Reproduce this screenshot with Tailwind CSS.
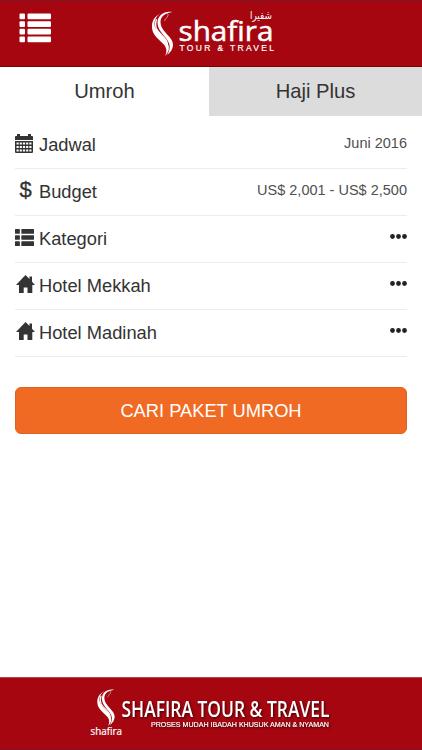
<!DOCTYPE html>
<html lang="id">
<head>
<meta charset="utf-8">
<title>Shafira Tour &amp; Travel</title>
<script src="https://cdn.jsdelivr.net/npm/@tailwindcss/browser@4"></script>
</head>
<body class="bg-white">
<svg class="hidden">
  <symbol id="flame" viewBox="0 0 24 45">
    <path d="M11 2C4 5 1 10 1.500 17C2 26 13 31 15 36C16.500 39 16 42 14.500 45C20 40 19 34 15 29C10 23 4 19 4 13C4 8 7 4 11 2z"/>
    <path d="M22 1C14-.5 7 4 7 12C7 21 18 27 19 34C19.500 38 18.500 41 16.500 44C23 39 24 33 20.500 28C17 23 10 18 10 11C10 5 15 2 22 1z"/>
    <path d="M6 8C3 18 8 21 13 26C17 30 18 35 17 40" fill="none" stroke="currentColor" stroke-width="1.400"/>
    <path d="M17 2.500C19 5 15 7 14 10" fill="none" stroke="currentColor" stroke-width=".8" opacity=".7"/>
  </symbol>
  <symbol id="list" viewBox="0 0 18 16">
    <path d="M.5 0h3.600q.5 0 .5.500v3.400q0 .5-.5.500H.5q-.5 0-.5-.5V.5Q0 0 .5 0zM6.500 0h11q.5 0 .5.500v3.400q0 .5-.5.500h-11q-.5 0-.5-.5V.5q0-.5.500-.5zM.5 5.800h3.600q.5 0 .5.500v3.400q0 .5-.5.500H.5q-.5 0-.5-.5V6.300q0-.5.500-.5zM6.500 5.800h11q.5 0 .5.500v3.400q0 .5-.5.500h-11q-.5 0-.5-.5V6.300q0-.5.500-.5zM.5 11.600h3.600q.5 0 .5.500v3.400q0 .5-.5.500H.5q-.5 0-.5-.5v-3.400q0-.5.500-.5zM6.500 11.600h11q.5 0 .5.500v3.400q0 .5-.5.500h-11q-.5 0-.5-.5v-3.400q0-.5.500-.5z"/>
  </symbol>
  <symbol id="home" viewBox="0 0 19 18"><path d="M9.500 0 13.500 4V1.500H16V6.700L19 10H16.300v8h-4.800v-5.500H7.700V18H3v-8H0z"/></symbol>
</svg>
<div class="flex h-[750px] w-[422px] flex-col overflow-hidden font-['Liberation_Sans',Arial,sans-serif] text-[#333]">
  <header class="h-[67px] shrink-0 border-y border-t-[#7c1626] border-b-[#7d0008] bg-[#a5060f] text-white">
    <svg class="-mt-px block" width="422" height="67" fill="currentColor">
      <g>
        <rect x="19.500" y="13.500" width="5.500" height="5.700" rx="1"/><rect x="27.500" y="13.500" width="23.500" height="5.700" rx="1"/>
        <rect x="19.500" y="21.200" width="5.500" height="5.700" rx="1"/><rect x="27.500" y="21.200" width="23.500" height="5.700" rx="1"/>
        <rect x="19.500" y="28.800" width="5.500" height="5.700" rx="1"/><rect x="27.500" y="28.800" width="23.500" height="5.700" rx="1"/>
        <rect x="19.500" y="36.500" width="5.500" height="5.700" rx="1"/><rect x="27.500" y="36.500" width="23.500" height="5.700" rx="1"/>
      </g>
      <use href="#flame" x="150.500" y="11" width="24" height="45"/>
      <text x="178.500" y="40.500" font-family="Open Sans, sans-serif" font-size="27" font-weight="400" stroke="currentColor" stroke-width=".5" textLength="95" lengthAdjust="spacingAndGlyphs">shafira</text>
      <text x="250" y="18.500" font-family="DejaVu Sans, sans-serif" font-size="11" textLength="22" lengthAdjust="spacingAndGlyphs">شفيرا</text>
      <text x="179.500" y="50.800" font-family="Liberation Sans, sans-serif" font-size="8.500" textLength="94.500" stroke="currentColor" stroke-width=".2">TOUR &amp; TRAVEL</text>
    </svg>
  </header>
  <nav class="flex h-[49px] shrink-0 text-center text-[20.200px] leading-[49px]">
    <div class="w-[209px]">Umroh</div>
    <div class="flex-1 bg-[#dcdcdc]">Haji Plus</div>
  </nav>
  <main class="flex-1 px-[15px] pt-[6px] text-[18.300px]">
    <div class="flex h-[47px] items-center border-b border-[#ececec]">
      <svg class="mr-[6px] -mt-[4px]" width="18" height="19" viewBox="0 0 18 19" fill="currentColor"><path d="M0 3q0-1 1-1h1V0h3v2h8V0h3v2h1q1 0 1 1v3H0z"/><path fill-rule="evenodd" d="M0 7h18v11q0 1-1 1H1q-1 0-1-1zM1.500 8.500v2h2.200v-2zm3.200 0v2h2.200v-2zm3.200 0v2h2.200v-2zm3.200 0v2h2.200v-2zm3.200 0v2h2.200v-2zM1.500 12v2h2.200v-2zm3.200 0v2h2.200v-2zm3.200 0v2h2.200v-2zm3.200 0v2h2.200v-2zm3.200 0v2h2.200v-2zM1.500 15.500v2h2.200v-2zm3.200 0v2h2.200v-2zm3.200 0v2h2.200v-2zm3.200 0v2h2.200v-2zm3.200 0v2h2.200v-2z"/></svg>
      <span class="-mt-px">Jadwal</span><span class="ml-auto -mt-[3px] text-[14.500px] text-[#505050]">Juni 2016</span>
    </div>
    <div class="flex h-[47px] items-center border-b border-[#ececec]">
      <span class="-mt-[6px] w-[24px] pl-[4.500px] text-[22px] [-webkit-text-stroke:0.300px_#333]">$</span>
      <span class="-mt-px">Budget</span><span class="ml-auto -mt-[3px] text-[14.500px] text-[#505050]">US$ 2,001 - US$ 2,500</span>
    </div>
    <div class="flex h-[47px] items-center border-b border-[#ececec]">
      <svg class="mr-[5px] -mt-[3px]" width="19" height="17" fill="currentColor"><use href="#list" width="19" height="17"/></svg>
      <span class="-mt-px">Kategori</span>
      <svg class="ml-auto -mt-[6px]" width="17" height="5" fill="#222"><circle cx="2.500" cy="2.500" r="2.400"/><circle cx="8.500" cy="2.500" r="2.400"/><circle cx="14.500" cy="2.500" r="2.400"/></svg>
    </div>
    <div class="flex h-[47px] items-center border-b border-[#ececec]">
      <svg class="mr-[4px] ml-px -mt-[5px]" width="19" height="18" fill="currentColor"><use href="#home" width="19" height="18"/></svg>
      <span class="-mt-px">Hotel Mekkah</span>
      <svg class="ml-auto -mt-[6px]" width="17" height="5" fill="#222"><circle cx="2.500" cy="2.500" r="2.400"/><circle cx="8.500" cy="2.500" r="2.400"/><circle cx="14.500" cy="2.500" r="2.400"/></svg>
    </div>
    <div class="flex h-[47px] items-center border-b border-[#ececec]">
      <svg class="mr-[4px] ml-px -mt-[5px]" width="19" height="18" fill="currentColor"><use href="#home" width="19" height="18"/></svg>
      <span class="-mt-px">Hotel Madinah</span>
      <svg class="ml-auto -mt-[6px]" width="17" height="5" fill="#222"><circle cx="2.500" cy="2.500" r="2.400"/><circle cx="8.500" cy="2.500" r="2.400"/><circle cx="14.500" cy="2.500" r="2.400"/></svg>
    </div>
    <button class="mt-[30px] block h-[47px] w-full rounded-[6px] border border-[#e0621f] bg-[#f06a23] text-[18.300px] text-white">CARI PAKET UMROH</button>
  </main>
  <footer class="h-[73px] shrink-0 border-y border-t-[#b5404a] border-b-[#7c1626] bg-[#a5060f] text-white">
    <svg class="block" width="422" height="71" fill="currentColor">
      <use href="#flame" x="96" y="11" width="20" height="37"/>
      <text x="90.500" y="57" font-family="Open Sans, sans-serif" font-size="10" stroke="currentColor" stroke-width=".2" textLength="31.500" lengthAdjust="spacingAndGlyphs">shafira</text>
      <g class="drop-shadow-[1px_1px_1px_rgba(0,0,0,0.6)]">
      <text x="121.500" y="38.500" font-family="Open Sans, sans-serif" font-size="22" font-weight="600" textLength="208" lengthAdjust="spacingAndGlyphs">SHAFIRA TOUR &amp; TRAVEL</text>
      <text x="151" y="49" font-family="Liberation Sans, sans-serif" font-size="8" textLength="178" lengthAdjust="spacingAndGlyphs" stroke="currentColor" stroke-width=".2">PROSES MUDAH IBADAH KHUSUK AMAN &amp; NYAMAN</text>
      </g>
    </svg>
  </footer>
</div>
</body>
</html>
